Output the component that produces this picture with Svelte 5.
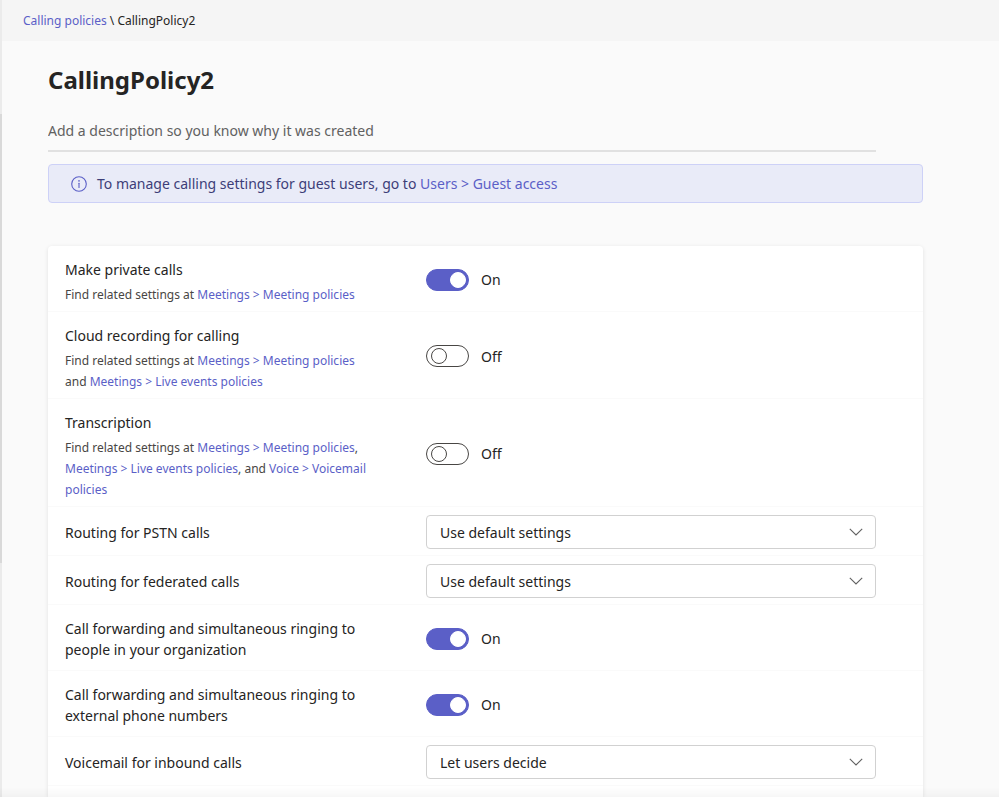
<script>
  const meetingPolicies = { text: 'Meetings > Meeting policies', href: '#meeting-policies' };
  const liveEvents = { text: 'Meetings > Live events policies', href: '#live-events-policies' };
  const voicemailPolicies = { text: 'Voice > Voicemail policies', href: '#voicemail-policies' };

  const routingOptions = ['Use default settings', 'Send to unanswered settings', 'Send to voicemail'];
  const voicemailOptions = ['Let users decide', 'On', 'Off'];

  let description = $state('');
  let settings = $state([
    {
      id: 'private-calls',
      label: 'Make private calls',
      hint: [{ text: 'Find related settings at ' }, meetingPolicies],
      on: true
    },
    {
      id: 'cloud-recording',
      label: 'Cloud recording for calling',
      hint: [{ text: 'Find related settings at ' }, meetingPolicies, { text: ' and ' }, liveEvents],
      on: false
    },
    {
      id: 'transcription',
      label: 'Transcription',
      hint: [
        { text: 'Find related settings at ' },
        meetingPolicies,
        { text: ', ' },
        liveEvents,
        { text: ', and ' },
        voicemailPolicies
      ],
      on: false
    },
    { id: 'pstn', label: 'Routing for PSTN calls', options: routingOptions, value: routingOptions[0] },
    { id: 'federated', label: 'Routing for federated calls', options: routingOptions, value: routingOptions[0] },
    {
      id: 'forward-internal',
      label: 'Call forwarding and simultaneous ringing to people in your organization',
      on: true
    },
    {
      id: 'forward-external',
      label: 'Call forwarding and simultaneous ringing to external phone numbers',
      on: true
    },
    { id: 'voicemail', label: 'Voicemail for inbound calls', options: voicemailOptions, value: voicemailOptions[0] }
  ]);
</script>

<div class="page">
  <div class="rail"><div class="rail-thumb"></div></div>

  <div class="content">
    <nav class="breadcrumb" aria-label="Breadcrumb">
      <a href="#policies">Calling policies</a> \ <span>CallingPolicy2</span>
    </nav>

    <main>
      <h1>CallingPolicy2</h1>
      <input
        class="description"
        type="text"
        aria-label="Description"
        placeholder="Add a description so you know why it was created"
        bind:value={description}
      />

      <div class="notice">
        <svg width="16" height="16" viewBox="0 0 16 16" aria-hidden="true">
          <circle cx="8" cy="8" r="7.3" fill="none" stroke="currentColor" stroke-width="1.1" />
          <circle cx="8" cy="4.9" r="0.8" fill="currentColor" />
          <path d="M8 7.2v4.2" stroke="currentColor" stroke-width="1.1" stroke-linecap="round" />
        </svg>
        <p>To manage calling settings for guest users, go to <a href="#guest-access">Users &gt; Guest access</a></p>
      </div>

      <div class="card">
        {#each settings as setting (setting.id)}
          <div class="row">
            <div class="info" class:with-hint={setting.hint}>
              <label for={setting.id}>{setting.label}</label>
              {#if setting.hint}
                <p class="hint">
                  {#each setting.hint as part}{#if part.href}<a href={part.href}>{part.text}</a>{:else}{part.text}{/if}{/each}
                </p>
              {/if}
            </div>

            {#if setting.options}
              <div class="select">
                <select id={setting.id} bind:value={setting.value}>
                  {#each setting.options as option}
                    <option>{option}</option>
                  {/each}
                </select>
                <svg class="chevron" width="14" height="8" viewBox="0 0 14 8" aria-hidden="true">
                  <path d="M0.8 0.8L7 7l6.2-6.2" fill="none" stroke="currentColor" stroke-width="1.1" />
                </svg>
              </div>
            {:else}
              <div class="toggle">
                <input id={setting.id} type="checkbox" role="switch" bind:checked={setting.on} />
                <span>{setting.on ? 'On' : 'Off'}</span>
              </div>
            {/if}
          </div>
        {/each}
      </div>
    </main>
  </div>
</div>

<style>
  :global(body) {
    margin: 0;
    background: #fafafa;
  }

  .page {
    display: flex;
    min-height: 100vh;
    font-family: 'Segoe UI', 'Noto Sans', sans-serif;
    font-size: 14px;
    line-height: 21px;
    color: #252423;
  }
  /* soft edge where the page scrolls out of view */
  .page::after {
    content: '';
    position: fixed;
    inset: auto 0 0 0;
    height: 10px;
    background: linear-gradient(transparent, rgba(0, 0, 0, 0.03));
    pointer-events: none;
  }

  a {
    color: #5b5fc7;
    text-decoration: none;
  }
  a:hover {
    text-decoration: underline;
  }

  p {
    margin: 0;
  }

  .rail {
    width: 2px;
    flex: none;
    padding-top: 114px;
    box-sizing: border-box;
    background: #ebebeb;
  }
  .rail-thumb {
    height: 449px;
    background: #d9d9d9;
  }

  .content {
    flex: 1;
    display: flex;
    flex-direction: column;
    min-width: 0;
  }

  .breadcrumb {
    padding: 10px 21px;
    background: #f5f5f5;
    font-size: 12px;
  }

  main {
    flex: 1;
    display: flex;
    flex-direction: column;
    padding: 20px 76px 0 46px;
  }

  h1 {
    margin: 0;
    font-size: 24px;
    line-height: 38px;
    font-weight: 700;
  }

  .description {
    margin: 13px 47px 0 0;
    padding: 8px 0 9px;
    border: 0;
    border-bottom: 2px solid #e1e1e1;
    background: transparent;
    font: inherit;
    line-height: 21px;
    color: inherit;
    outline: none;
  }
  .description::placeholder {
    color: #616161;
    opacity: 1;
  }

  .notice {
    display: flex;
    align-items: center;
    gap: 10px;
    margin-top: 12px;
    padding: 8px 22px;
    border: 1px solid #cdd1f7;
    border-radius: 4px;
    background: #e9ebf8;
    color: #3d3e78;
  }
  .notice svg {
    flex: none;
    color: #5b5fc7;
  }

  .card {
    flex: 1;
    margin-top: 43px;
    border-radius: 4px 4px 0 0;
    background: #fff;
    box-shadow: 0 1px 4px rgba(0, 0, 0, 0.1);
  }

  .row {
    display: grid;
    grid-template-columns: 312px 1fr;
    gap: 49px;
    align-items: center;
    padding: 8px 47px 6px 17px;
    border-bottom: 1px solid #fafafa;
  }

  .info {
    padding: 5px 0 4px;
  }
  .info.with-hint {
    padding-bottom: 0;
  }
  .info label {
    display: block;
  }

  .hint {
    margin-top: 4px;
    font-size: 12px;
    color: #484644;
  }

  .toggle {
    display: flex;
    align-items: center;
    gap: 12px;
  }
  .toggle input {
    appearance: none;
    display: flex;
    align-items: center;
    width: 43px;
    height: 22px;
    margin: 0;
    padding: 0 2px 0 4px;
    box-sizing: border-box;
    border: 1px solid #484644;
    border-radius: 11px;
    background: #fff;
    cursor: pointer;
  }
  .toggle input::before {
    content: '';
    width: 16px;
    height: 16px;
    box-sizing: border-box;
    border: 1px solid #484644;
    border-radius: 50%;
    background: #fff;
  }
  .toggle input:checked {
    justify-content: flex-end;
    border-color: #5b5fc7;
    background: #5b5fc7;
  }
  .toggle input:checked::before {
    border-color: #fff;
  }

  .select {
    display: grid;
    align-items: center;
  }
  .select select {
    grid-area: 1 / 1;
    appearance: none;
    width: 100%;
    height: 34px;
    padding: 0 36px 0 13px;
    border: 1px solid #d1d1d1;
    border-radius: 4px;
    background: #fff;
    font: inherit;
    color: inherit;
  }
  .chevron {
    grid-area: 1 / 1;
    justify-self: end;
    margin-right: 13px;
    color: #616161;
    pointer-events: none;
  }
</style>
